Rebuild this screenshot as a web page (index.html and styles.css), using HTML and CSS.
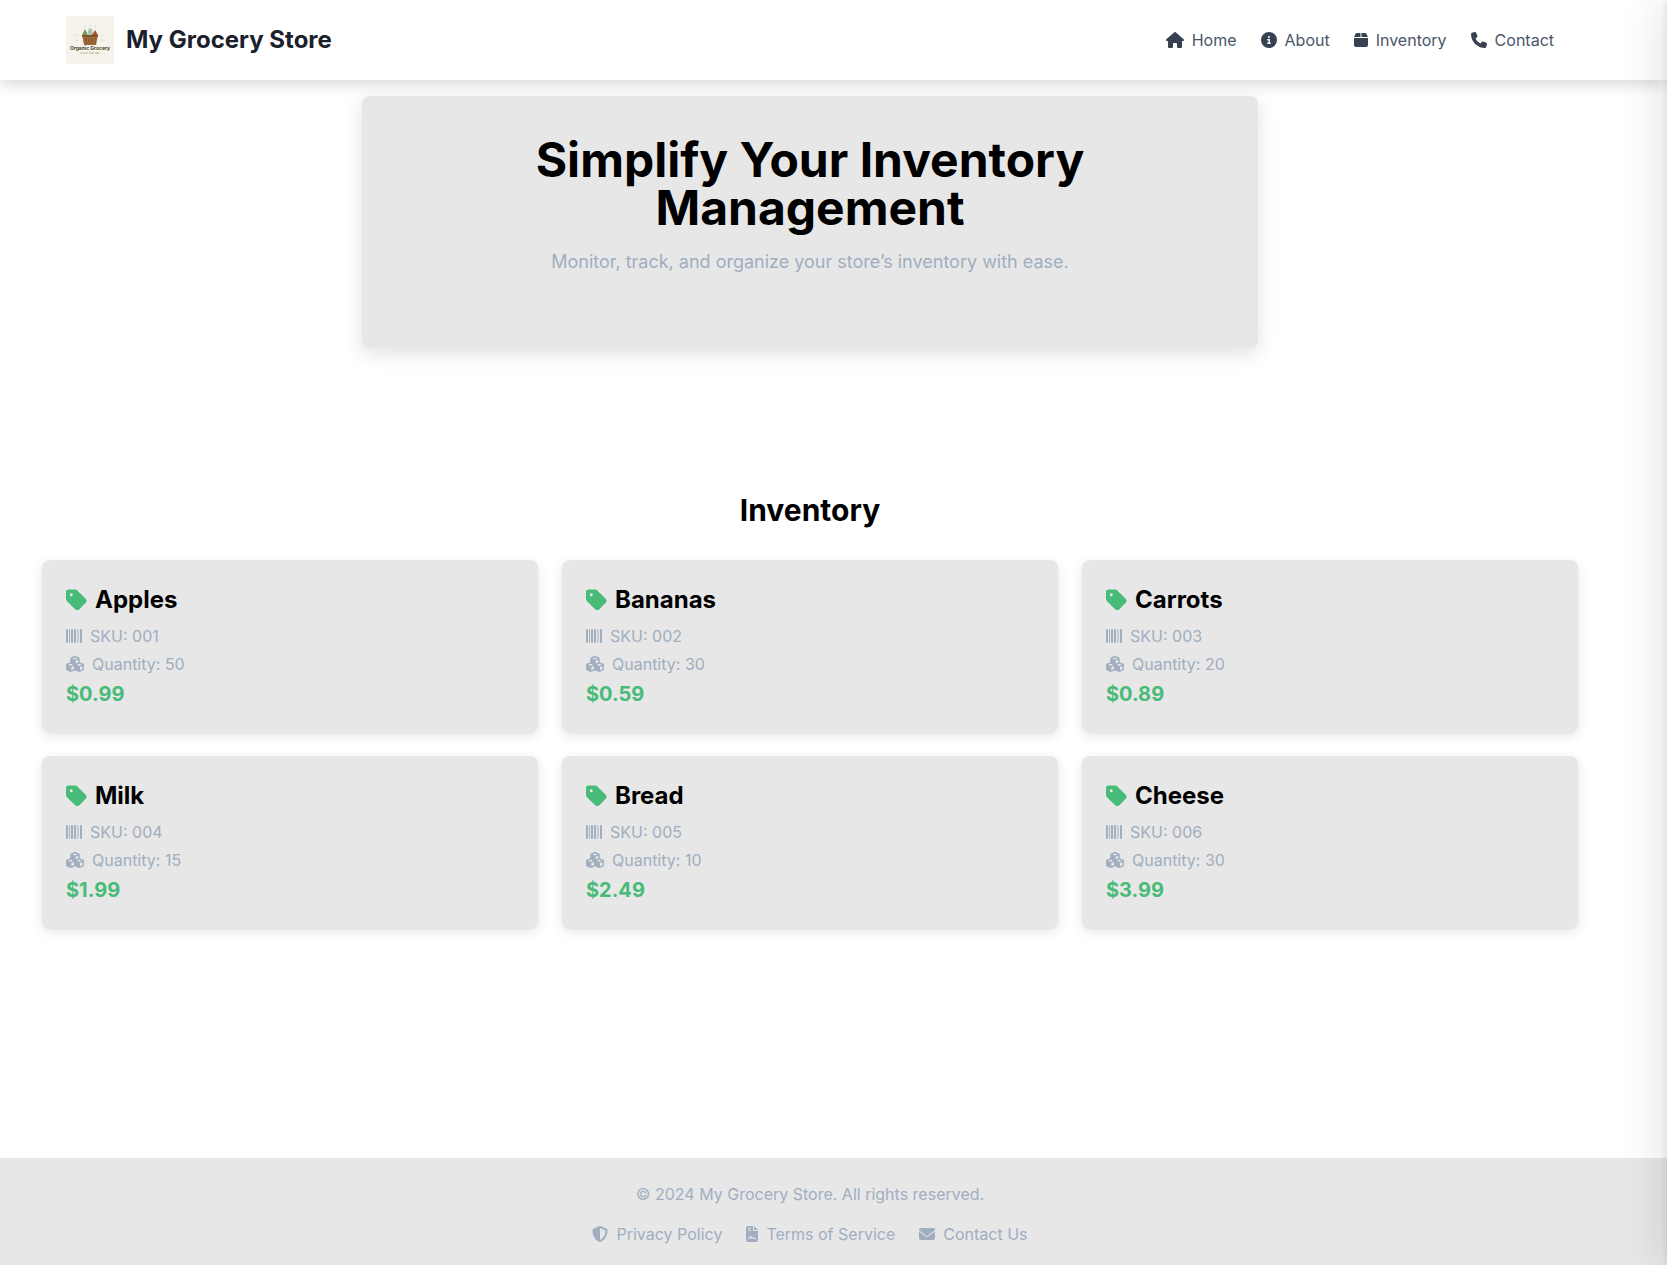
FILE: index.html
```html
<!DOCTYPE html>
<html lang="en">
<head>
<meta charset="utf-8">
<title>My Grocery Store</title>
<link rel="stylesheet" href="styles.css">
</head>
<body>
<svg class="sprite" aria-hidden="true">
  <symbol id="i-home" viewBox="0 0 576 512"><path d="M575.8 255.5c0 18-15 32.1-32 32.1h-32l.7 160.2c0 2.7-.2 5.4-.5 8.1V472c0 22.1-17.9 40-40 40H456c-1.1 0-2.2 0-3.3-.1c-1.4 .1-2.8 .1-4.2 .1H416 392c-22.1 0-40-17.9-40-40V448 384c0-17.7-14.3-32-32-32H256c-17.7 0-32 14.3-32 32v64 24c0 22.1-17.9 40-40 40H160 128.1c-1.5 0-3-.1-4.5-.2c-1.2 .1-2.4 .2-3.6 .2H104c-22.1 0-40-17.9-40-40V360c0-.9 0-1.9 .1-2.8V287.6H32c-18 0-32-14-32-32.1c0-9 3-17 10-24L266.4 8c7-7 15-8 22-8s15 2 21 7L564.8 231.5c8 7 12 15 11 24z"/></symbol>
  <symbol id="i-info" viewBox="0 0 512 512"><path d="M256 512A256 256 0 1 0 256 0a256 256 0 1 0 0 512zM216 336h24V272H216c-13.3 0-24-10.7-24-24s10.7-24 24-24h48c13.3 0 24 10.7 24 24v88h8c13.3 0 24 10.7 24 24s-10.7 24-24 24H216c-13.3 0-24-10.7-24-24s10.7-24 24-24zm40-208a32 32 0 1 1 0 64 32 32 0 1 1 0-64z"/></symbol>
  <symbol id="i-box" viewBox="0 0 448 512"><path d="M50.7 58.5L0 160H208V32H93.7C75.5 32 58.9 42.3 50.7 58.5zM240 160H448L397.3 58.5C389.1 42.3 372.5 32 354.3 32H240V160zm208 32H0V416c0 35.3 28.7 64 64 64H384c35.3 0 64-28.7 64-64V192z"/></symbol>
  <symbol id="i-phone" viewBox="0 0 512 512"><path d="M164.9 24.6c-7.7-18.6-28-28.5-47.4-23.2l-88 24C12.1 30.2 0 46 0 64C0 311.4 200.6 512 448 512c18 0 33.8-12.1 38.6-29.5l24-88c5.3-19.4-4.6-39.7-23.2-47.4l-96-40c-16.3-6.8-35.2-2.1-46.3 11.6L304.7 368C234.3 334.7 177.3 277.7 144 207.3L193.3 167c13.7-11.2 18.4-30 11.6-46.3l-40-96z"/></symbol>
  <symbol id="i-tag" viewBox="0 0 448 512"><path d="M0 80V229.5c0 17 6.7 33.3 18.7 45.3l176 176c25 25 65.5 25 90.5 0L418.7 317.3c25-25 25-65.5 0-90.5l-176-176c-12-12-28.3-18.7-45.3-18.7H48C21.5 32 0 53.5 0 80zm112 32a32 32 0 1 1 0 64 32 32 0 1 1 0-64z"/></symbol>
  <symbol id="i-barcode" viewBox="0 0 512 512"><path d="M24 32C10.7 32 0 42.7 0 56V456c0 13.3 10.7 24 24 24H40c13.3 0 24-10.7 24-24V56c0-13.3-10.7-24-24-24H24zm88 0c-8.8 0-16 7.2-16 16V464c0 8.8 7.2 16 16 16s16-7.2 16-16V48c0-8.8-7.2-16-16-16zm72 0c-13.3 0-24 10.7-24 24V456c0 13.3 10.7 24 24 24h16c13.3 0 24-10.7 24-24V56c0-13.3-10.7-24-24-24H184zm96 0c-13.3 0-24 10.7-24 24V456c0 13.3 10.7 24 24 24h16c13.3 0 24-10.7 24-24V56c0-13.3-10.7-24-24-24H280zM448 56V456c0 13.3 10.7 24 24 24h16c13.3 0 24-10.7 24-24V56c0-13.3-10.7-24-24-24H472c-13.3 0-24 10.7-24 24zm-64-24c-8.8 0-16 7.2-16 16V464c0 8.8 7.2 16 16 16s16-7.2 16-16V48c0-8.8-7.2-16-16-16z"/></symbol>
  <symbol id="i-cubes" viewBox="0 0 576 512"><path d="M290.8 48.6l78.4 29.7L288 109.5 206.8 78.3l78.4-29.7c1.8-.7 3.8-.7 5.7 0zM136 92.5V204.7c-1.3 .4-2.6 .8-3.9 1.3l-96 36.4C14.4 250.6 0 271.5 0 294.7V413.9c0 22.2 13.1 42.3 33.5 51.3l96 42.2c14.4 6.3 30.7 6.3 45.1 0L288 457.5l113.5 49.9c14.4 6.3 30.7 6.3 45.1 0l96-42.2c20.3-8.9 33.5-29.1 33.5-51.3V294.7c0-23.3-14.4-44.1-36.1-52.4l-96-36.4c-1.3-.5-2.6-.9-3.9-1.3V92.5c0-23.3-14.4-44.1-36.1-52.4l-96-36.4c-12.8-4.8-26.9-4.8-39.7 0l-96 36.4C150.4 48.4 136 69.3 136 92.5zM392 210.6l-82.4 31.2V152.6L392 121v89.6zM154.8 250.9l78.4 29.7L152 311.7 70.8 280.6l78.4-29.7c1.8-.7 3.8-.7 5.7 0zm18.8 204.4V354.8L256 323.2v95.9l-82.4 36.2zM421.2 250.9c1.8-.7 3.8-.7 5.7 0l78.4 29.7L424 311.7l-81.2-31.1 78.4-29.7zM523.2 421.2l-77.6 34.1V354.8L528 323.2v90.7c0 3.2-1.9 6-4.8 7.3z"/></symbol>
  <symbol id="i-shield" viewBox="0 0 512 512"><path d="M256 0c4.6 0 9.2 1 13.4 2.9L457.7 82.8c22 9.3 38.4 31 38.3 57.2c-.5 99.2-41.3 280.7-213.6 363.2c-16.7 8-36.1 8-52.8 0C57.3 420.7 16.5 239.2 16 140c-.1-26.2 16.3-47.9 38.3-57.2L242.7 2.9C246.8 1 251.4 0 256 0zm0 66.8V444.8C394 378 431.1 230.1 432 141.4L256 66.8l0 0z"/></symbol>
  <symbol id="i-file" viewBox="0 0 384 512"><path d="M64 0C28.7 0 0 28.7 0 64V448c0 35.3 28.7 64 64 64H320c35.3 0 64-28.7 64-64V160H256c-17.7 0-32-14.3-32-32V0H64zM256 0V128H384L256 0zM80 64h64c8.8 0 16 7.2 16 16s-7.2 16-16 16H80c-8.8 0-16-7.2-16-16s7.2-16 16-16zm0 64h64c8.8 0 16 7.2 16 16s-7.2 16-16 16H80c-8.8 0-16-7.2-16-16s7.2-16 16-16zm54.2 253.8c-6.1 20.3-24.8 34.2-46 34.2H80c-8.8 0-16-7.2-16-16s7.2-16 16-16h8.2c7.1 0 13.3-4.6 15.3-11.4l14.9-49.5c3.4-11.3 13.8-19.1 25.6-19.1s22.2 7.7 25.6 19.1l11.6 38.6c7.4-6.2 16.8-9.7 26.8-9.7c15.9 0 30.4 9 37.5 23.2l4.4 8.8H304c8.8 0 16 7.2 16 16s-7.2 16-16 16H240c-6.1 0-11.6-3.4-14.3-8.8l-8.8-17.7c-1.7-3.4-5.1-5.5-8.8-5.5s-7.2 2.1-8.8 5.5l-8.8 17.7c-2.9 5.9-9.2 9.4-15.7 8.8s-12.1-5.1-13.9-11.3L144 349l-9.8 32.8z"/></symbol>
  <symbol id="i-mail" viewBox="0 0 512 512"><path d="M48 64C21.5 64 0 85.5 0 112c0 15.1 7.1 29.3 19.2 38.4L236.8 313.6c11.4 8.5 27 8.5 38.4 0L492.8 150.4c12.1-9.1 19.2-23.3 19.2-38.4c0-26.5-21.5-48-48-48H48zM0 176V384c0 35.3 28.7 64 64 64H448c35.3 0 64-28.7 64-64V176L294.4 339.2c-22.8 17.1-54 17.1-76.8 0L0 176z"/></symbol>
</svg>

<header class="site-header">
  <div class="header-inner">
    <a class="brand" href="#">
      <svg class="logo" viewBox="0 0 48 48">
        <rect width="48" height="48" fill="#f6f3ec"/>
        <path d="M24 8v3M18 9l1 3M30 9l-1 3M12 13l3 2M36 13l-3 2M8 19l5 1M40 19l-5 1M9 25l4-1M39 25l-4-1" stroke="#d8d3c2" stroke-width=".5"/>
        <path d="M16 19l3-6 3 6z" fill="#7c9a48"/>
        <path d="M21 19l2-7 3 1 1 6z" fill="#a6c2bc"/>
        <path d="M26 19l3-5 3 5z" fill="#a9552b"/>
        <path d="M16 19h16l-2 10H18z" fill="#a06a38"/>
        <path d="M16 19h16v1.6H16z" fill="#7a4c26"/>
        <path d="M20 22v6M23 22v6M26 22v6M29 22v6" stroke="#734822" stroke-width=".7"/>
        <text class="logo-name" x="24" y="33.5" text-anchor="middle">Organic Grocery</text>
        <text class="logo-sub" x="24" y="37.5" text-anchor="middle">SHOP ONLINE</text>
      </svg>
      <span class="brand-name">My Grocery Store</span>
    </a>
    <nav class="main-nav">
      <a href="#"><svg class="icon w18 nav-icon"><use href="#i-home"/></svg>Home</a>
      <a href="#"><svg class="icon nav-icon"><use href="#i-info"/></svg>About</a>
      <a href="#"><svg class="icon w14 nav-icon"><use href="#i-box"/></svg>Inventory</a>
      <a href="#"><svg class="icon nav-icon"><use href="#i-phone"/></svg>Contact</a>
    </nav>
  </div>
</header>

<main class="content">
  <section class="hero">
    <h1>Simplify Your Inventory Management</h1>
    <p>Monitor, track, and organize your store’s inventory with ease.</p>
  </section>

  <section class="inventory">
    <h2>Inventory</h2>
    <div class="grid">
      <article class="card">
        <h3><svg class="tag"><use href="#i-tag"/></svg>Apples</h3>
        <p class="meta"><svg class="icon"><use href="#i-barcode"/></svg>SKU: 001</p>
        <p class="meta qty"><svg class="icon w18"><use href="#i-cubes"/></svg>Quantity: 50</p>
        <p class="price">$0.99</p>
      </article>
      <article class="card">
        <h3><svg class="tag"><use href="#i-tag"/></svg>Bananas</h3>
        <p class="meta"><svg class="icon"><use href="#i-barcode"/></svg>SKU: 002</p>
        <p class="meta qty"><svg class="icon w18"><use href="#i-cubes"/></svg>Quantity: 30</p>
        <p class="price">$0.59</p>
      </article>
      <article class="card">
        <h3><svg class="tag"><use href="#i-tag"/></svg>Carrots</h3>
        <p class="meta"><svg class="icon"><use href="#i-barcode"/></svg>SKU: 003</p>
        <p class="meta qty"><svg class="icon w18"><use href="#i-cubes"/></svg>Quantity: 20</p>
        <p class="price">$0.89</p>
      </article>
      <article class="card">
        <h3><svg class="tag"><use href="#i-tag"/></svg>Milk</h3>
        <p class="meta"><svg class="icon"><use href="#i-barcode"/></svg>SKU: 004</p>
        <p class="meta qty"><svg class="icon w18"><use href="#i-cubes"/></svg>Quantity: 15</p>
        <p class="price">$1.99</p>
      </article>
      <article class="card">
        <h3><svg class="tag"><use href="#i-tag"/></svg>Bread</h3>
        <p class="meta"><svg class="icon"><use href="#i-barcode"/></svg>SKU: 005</p>
        <p class="meta qty"><svg class="icon w18"><use href="#i-cubes"/></svg>Quantity: 10</p>
        <p class="price">$2.49</p>
      </article>
      <article class="card">
        <h3><svg class="tag"><use href="#i-tag"/></svg>Cheese</h3>
        <p class="meta"><svg class="icon"><use href="#i-barcode"/></svg>SKU: 006</p>
        <p class="meta qty"><svg class="icon w18"><use href="#i-cubes"/></svg>Quantity: 30</p>
        <p class="price">$3.99</p>
      </article>
    </div>
  </section>
</main>

<footer class="site-footer">
  <div class="footer-inner">
    <p>© 2024 My Grocery Store. All rights reserved.</p>
    <div class="footer-links">
      <a href="#"><svg class="icon"><use href="#i-shield"/></svg>Privacy Policy</a>
      <a href="#"><svg class="icon w12"><use href="#i-file"/></svg>Terms of Service</a>
      <a href="#"><svg class="icon"><use href="#i-mail"/></svg>Contact Us</a>
    </div>
  </div>
</footer>

<div class="edge-shadow"></div>
</body>
</html>
```

FILE: styles.css
```css
* { box-sizing: border-box; }
html, body { margin: 0; height: 100%; }
body {
  height: 1265px;
  overflow: hidden;
  display: flex;
  flex-direction: column;
  background: #fff;
  color: #000;
  font-family: Inter, "Liberation Sans", sans-serif;
  font-size: 16px;
  line-height: 24px;
}
a { color: inherit; text-decoration: none; }
h1, h2, h3, p { margin: 0; }
.sprite { display: none; }

.icon { flex: none; width: 16px; height: 16px; margin-right: 8px; fill: currentColor; }
.icon.w18 { width: 18px; }
.icon.w14 { width: 14px; }
.icon.w12 { width: 12px; }

.site-header {
  position: relative;
  flex: none;
  height: 80px;
  background: #fff;
  box-shadow: 0 4px 14px rgba(0,0,0,.16);
}
.header-inner {
  width: 1536px;
  height: 80px;
  margin-left: 42px;
  padding: 0 24px;
  display: flex;
  align-items: center;
  justify-content: space-between;
}
.brand { display: flex; align-items: center; gap: 12px; }
.logo { width: 48px; height: 48px; display: block; }
.logo-name { font: 700 5px Inter, sans-serif; fill: #3c4a1c; }
.logo-sub { font: 600 2.4px Inter, sans-serif; fill: #a3a86a; letter-spacing: .3px; }
.brand-name { font-size: 24px; line-height: 32px; font-weight: 700; color: #1a202c; }
.main-nav { display: flex; gap: 24px; color: #4a5568; }
.main-nav a { display: flex; align-items: center; }
.nav-icon { color: #374151; }

.content { flex: none; width: 1620px; }
.hero {
  width: 896px;
  height: 252px;
  margin: 16px auto 0;
  padding: 40px 32px;
  text-align: center;
  background: #e7e7e7;
  border-radius: 8px;
  box-shadow: 0 6px 20px rgba(0,0,0,.12);
}
.hero h1 { font-size: 48px; line-height: 48px; font-weight: 700; }
.hero p { margin-top: 16px; font-size: 18px; line-height: 28px; color: #a0aec0; }

.inventory { width: 1536px; margin: 144px auto 0; }
.inventory h2 { font-size: 30px; line-height: 36px; font-weight: 700; text-align: center; margin-bottom: 32px; }
.grid { display: grid; grid-template-columns: repeat(3, 1fr); gap: 24px; }
.card {
  padding: 24px;
  background: #e7e7e7;
  border-radius: 8px;
  box-shadow: 0 4px 12px rgba(0,0,0,.1), 0 1px 3px rgba(0,0,0,.05);
}
.card h3 { display: flex; align-items: center; font-size: 24px; line-height: 32px; font-weight: 700; }
.tag { flex: none; width: 21px; height: 24px; margin-right: 8px; fill: #48bb78; }
.meta { display: flex; align-items: center; margin-top: 8px; color: #a0aec0; }
.meta.qty { margin-top: 4px; }
.price { margin-top: 4px; font-size: 20px; line-height: 28px; font-weight: 700; color: #48bb78; }

.site-footer { margin-top: auto; height: 107px; background: #e7e7e7; color: #a0aec0; }
.footer-inner { width: 1620px; padding-top: 24px; text-align: center; }
.footer-links { display: flex; justify-content: center; gap: 24px; margin-top: 16px; }
.footer-links a { display: flex; align-items: center; }

.edge-shadow {
  position: fixed;
  top: 0;
  left: 100%;
  width: 10px;
  height: 100%;
  box-shadow: 0 0 40px rgba(0,0,0,.3), 0 0 8px rgba(0,0,0,.12);
}
```
